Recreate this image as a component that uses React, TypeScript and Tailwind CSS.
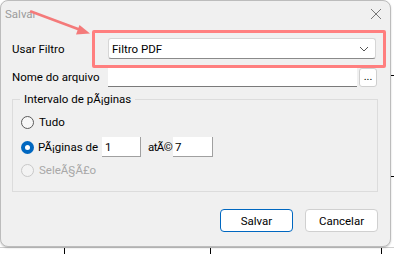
import React from "react";

const font = { fontFamily: 'Roboto, "Segoe UI", sans-serif' };

function Radio({ checked, disabled }: { checked?: boolean; disabled?: boolean }) {
  if (checked) {
    return (
      <span className="w-[13px] h-[13px] rounded-full bg-[#0067c0] flex items-center justify-center shrink-0">
        <span className="w-[5px] h-[5px] rounded-full bg-white" />
      </span>
    );
  }
  return (
    <span
      className={
        "w-[13px] h-[13px] rounded-full border shrink-0 " +
        (disabled ? "border-[#c8c8c8] bg-[#f3f3f3]" : "border-[#5a5a5a] bg-[#f7f7f7]")
      }
    />
  );
}

export default function App() {
  return (
    <div className="relative w-[394px] h-[254px] bg-white overflow-hidden text-[11.5px] leading-[14px] text-black whitespace-nowrap" style={font}>
      <div className="flex">
        <div className="w-[391px] h-[247px] bg-[#f0f0f0] border border-[#bcbcbc] rounded-[8px] flex flex-col shrink-0 shadow-[0_1px_2px_rgba(0,0,0,0.2)]">
          {/* title bar */}
          <div className="h-[26px] flex items-center justify-between pl-[4px] pr-[7px]">
            <span className="text-[#9b9b9b]">Salvar</span>
            <svg width="12" height="12" viewBox="0 0 12 12" className="mr-[1px]">
              <path d="M1 1 L11 11 M11 1 L1 11" stroke="#777" strokeWidth="1" fill="none" />
            </svg>
          </div>
          {/* row 1 */}
          <div className="flex items-center mt-[11px] h-[21px]">
            <span className="w-[107px] pl-[11px]">Usar Filtro</span>
            <div className="w-[268px] h-[21px] bg-white border border-[#d6d6d6] border-b-[#8a8a8a] rounded-[3px] flex items-center justify-between pl-[3px] pr-[6px]">
              <span>Filtro PDF</span>
              <svg width="10" height="6" viewBox="0 0 10 6">
                <path d="M1 1 L5 5 L9 1" stroke="#555" strokeWidth="1" fill="none" />
              </svg>
            </div>
          </div>
          {/* row 2 */}
          <div className="flex items-center mt-[8px] h-[20px]">
            <span className="w-[107px] pl-[11px]">Nome do arquivo</span>
            <div className="w-[249px] h-[20px] bg-white border-b border-[#7a7a7a]" />
            <div className="ml-[2px] w-[18px] h-[19px] bg-white border border-[#cfcfcf] rounded-[3px] flex items-center justify-center text-[11px] leading-none pb-[2px]">
              ...
            </div>
          </div>
          {/* group */}
          <div className="relative mt-[12px] ml-[11px] w-[366px] h-[93px] border border-[#dcdcdc] flex flex-col pl-[8px]">
            <span className="absolute -top-[8px] left-[7px] bg-[#f0f0f0] px-[4px] leading-[15px]">Intervalo de pÃ¡ginas</span>
            <div className="flex items-center gap-[5px] mt-[14px] h-[16px]">
              <Radio />
              <span>Tudo</span>
            </div>
            <div className="flex items-center mt-[7px] h-[20px]">
              <Radio checked />
              <span className="ml-[4px] w-[64px]">PÃ¡ginas de</span>
              <div className="w-[39px] h-[20px] bg-white border-b border-r border-[#a0a0a0] flex items-center pl-[3px]">1</div>
              <span className="ml-[7px] w-[25px] tracking-[-0.6px]">atÃ©</span>
              <div className="w-[40px] h-[20px] bg-white border-b border-r border-[#a0a0a0] flex items-center pl-[2px]">7</div>
            </div>
            <div className="flex items-center gap-[5px] mt-[5px] h-[16px]">
              <Radio disabled />
              <span className="text-[#a8a8a8]">SeleÃ§Ã£o</span>
            </div>
          </div>
          {/* buttons */}
          <div className="flex justify-end gap-[12px] mt-[17px] pr-[12px]">
            <div className="w-[73px] h-[23px] bg-white border border-[#0067c0] rounded-[4px] flex items-center justify-center">
              Salvar
            </div>
            <div className="w-[73px] h-[23px] bg-white border border-[#d0d0d0] rounded-[4px] flex items-center justify-center">
              Cancelar
            </div>
          </div>
        </div>
        <div className="flex-1 flex flex-col">
          <div className="h-[75px]" />
          <div className="h-[1px] bg-black" />
          <div className="h-[100px]" />
          <div className="h-[1px] bg-black" />
        </div>
      </div>
      <div className="flex h-[7px] border-t border-[#cfcfcf]">
        <div className="w-[65px] border-r border-black" />
        <div className="w-[146px] border-r border-black" />
        <div className="w-[171px] border-r border-black" />
      </div>

      {/* annotation overlays */}
      <div className="absolute left-[92px] top-[30px] w-[294px] h-[38px] border-[3px] border-[#ff7f7f] rounded-[2px]" />
      <svg className="absolute left-0 top-0" width="120" height="50" viewBox="0 0 120 50">
        <path d="M31 11.5 L82 30.5" stroke="#f47a7a" strokeWidth="2.5" strokeLinecap="round" fill="none" />
        <path d="M90 33.5 L76 34.5 L79.5 25 Z" fill="#f47a7a" />
      </svg>
    </div>
  );
}
